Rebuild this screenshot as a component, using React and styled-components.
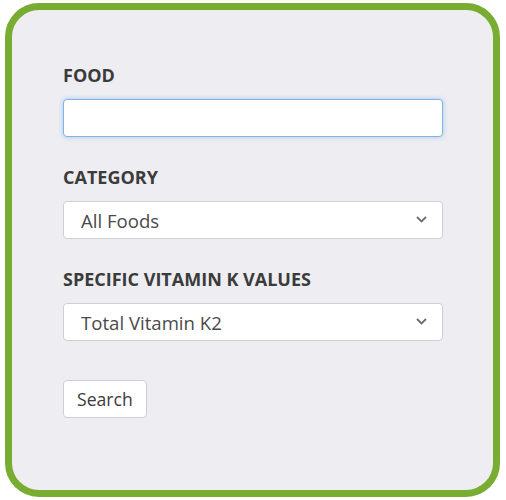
import { createGlobalStyle } from 'styled-components';
import styled from 'styled-components';

const GlobalStyle = createGlobalStyle`
  html, body {
    margin: 0;
    padding: 0;
    background: #ffffff;
  }
  * {
    box-sizing: border-box;
  }
`

const Page = styled.div`
  padding: 3px 6px 3px 5px;
  font-family: "Open Sans", "Liberation Sans", sans-serif;
`

const Card = styled.form`
  width: 495px;
  height: 494px;
  border: 7px solid #79ad31;
  border-radius: 34px;
  background: #eeedf2;
  padding: 53px 50px 0 51px;
  display: flex;
  flex-direction: column;
  align-items: flex-start;
`

const Field = styled.div`
  width: 100%;
  margin-bottom: 28px;
  display: flex;
  flex-direction: column;
`

const Label = styled.label`
  font-size: 18px;
  line-height: 25px;
  font-weight: 700;
  color: #3b3b3b;
  margin-bottom: 11px;
`

const TextInput = styled.input`
  width: 100%;
  height: 38px;
  border: 1px solid #7db6e6;
  border-radius: 4px;
  background: #ffffff;
  box-shadow: 0 0 5px rgba(102, 170, 233, 0.55);
  outline: none;
  font-family: inherit;
  font-size: 18px;
  padding: 0 16px;
`

const SelectWrap = styled.div`
  position: relative;
  width: 100%;
`

const Select = styled.select`
  width: 100%;
  height: 38px;
  appearance: none;
  border: 1px solid #cfcfd3;
  border-radius: 4px;
  background: #ffffff;
  font-family: inherit;
  font-size: 18.6px;
  color: #4a4a4a;
  padding: 0 40px 0 17px;
  outline: none;
`

const Chevron = styled.svg`
  position: absolute;
  right: 16px;
  top: 15px;
  pointer-events: none;
`

const SearchButton = styled.button`
  margin-top: 11px;
  height: 38px;
  padding: 0 13px;
  border: 1px solid #cfcfd3;
  border-radius: 4px;
  background: #ffffff;
  font-family: inherit;
  font-size: 17.6px;
  color: #3b3b3b;
  cursor: pointer;
`

function Dropdown({ options }) {
  return (
    <SelectWrap>
      <Select defaultValue={options[0]}>
        {options.map((o) => <option key={o}>{o}</option>)}
      </Select>
      <Chevron width="11" height="7" viewBox="0 0 11 7">
        <path d="M1 1 L5.5 5.5 L10 1" fill="none" stroke="#6d6d6d" strokeWidth="1.8" />
      </Chevron>
    </SelectWrap>
  )
}

export default function App() {
  return (
    <Page>
      <GlobalStyle />
      <Card onSubmit={(e) => e.preventDefault()}>
        <Field>
          <Label>FOOD</Label>
          <TextInput type="text" />
        </Field>
        <Field>
          <Label>CATEGORY</Label>
          <Dropdown options={['All Foods', 'Vegetables', 'Fruits', 'Dairy', 'Meat']} />
        </Field>
        <Field>
          <Label>SPECIFIC VITAMIN K VALUES</Label>
          <Dropdown options={['Total Vitamin K2', 'Vitamin K1', 'MK-4', 'MK-7']} />
        </Field>
        <SearchButton type="submit">Search</SearchButton>
      </Card>
    </Page>
  );
}
